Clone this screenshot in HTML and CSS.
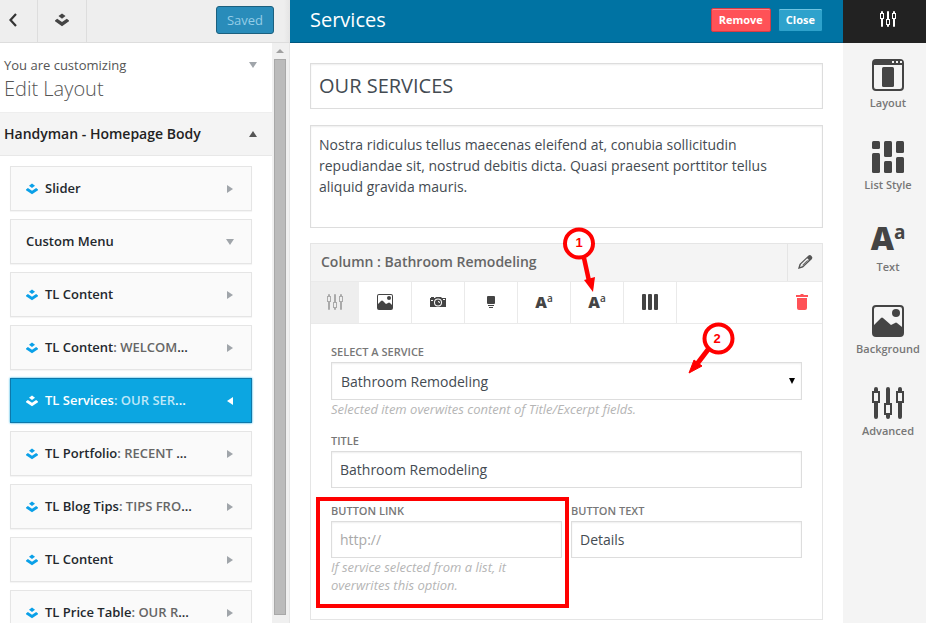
FILE: index.html
```html
<!DOCTYPE html>
<html lang="en">
<head>
<meta charset="utf-8">
<title>Edit Layout</title>
<link rel="stylesheet" href="styles.css">
</head>
<body>
<svg class="sprite" aria-hidden="true">
  <symbol id="i-stack" viewBox="0 0 16 16"><path d="M8 .500 12 3.500 8 6.500 4 3.500Z"/><path d="M2.500 6.500 8 10.300 13.500 6.500 16 8.500V9.500L8 15 0 9.500V8.500Z"/></symbol>
  <symbol id="i-sliders" viewBox="0 0 32 32"><path d="M4 0a2 2 0 0 1 2 2v2h2v12H6v14a2 2 0 0 1-4 0V16H0V4h2V2a2 2 0 0 1 2-2ZM2 6v8h4V6ZM28 0a2 2 0 0 1 2 2v2h2v12h-2v14a2 2 0 0 1-4 0V16h-2V4h2V2a2 2 0 0 1 2-2ZM26 6v8h4V6ZM16 0a2 2 0 0 1 2 2v14h2v12h-2v2a2 2 0 0 1-4 0v-2h-2V16h2V2a2 2 0 0 1 2-2ZM14 18v8h4v-8Z" fill-rule="evenodd"/></symbol>
  <symbol id="i-layout" viewBox="0 0 32 32"><path fill-rule="evenodd" d="M4 0h24a4 4 0 0 1 4 4v24a4 4 0 0 1-4 4H4a4 4 0 0 1-4-4V4a4 4 0 0 1 4-4ZM2 6v22a2 2 0 0 0 2 2h24a2 2 0 0 0 2-2V6ZM20 2v2h2V2ZM24 2v2h2V2ZM28 2v2h2V2Z"/><rect x="10" y="8" width="12" height="20" rx="1.500"/></symbol>
  <symbol id="i-list" viewBox="0 0 32 32"><rect width="8" height="8" rx="1.500"/><rect y="12" width="8" height="20" rx="1.500"/><rect x="12" width="8" height="16" rx="1.500"/><rect x="12" y="20" width="8" height="12" rx="1.500"/><rect x="24" width="8" height="12" rx="1.500"/><rect x="24" y="16" width="8" height="16" rx="1.500"/></symbol>
  <symbol id="i-image" viewBox="0 0 32 32"><path fill-rule="evenodd" d="M4 0h24a4 4 0 0 1 4 4v24a4 4 0 0 1-4 4H4a4 4 0 0 1-4-4V4a4 4 0 0 1 4-4ZM2 20l7-7q1-1 2 0l8 7 4-2q1-1 2 0l5 4V4a2 2 0 0 0-2-2H4a2 2 0 0 0-2 2Z"/><circle cx="24" cy="8" r="4"/></symbol>
  <symbol id="i-picture" viewBox="0 0 16 16"><path fill-rule="evenodd" d="M2 0h12a2 2 0 0 1 2 2v12a2 2 0 0 1-2 2H2a2 2 0 0 1-2-2V2a2 2 0 0 1 2-2ZM1 10l3-3q1-1 2 0l3 3 2-1q1-1 2 0l2 2V2a1 1 0 0 0-1-1H2a1 1 0 0 0-1 1Z"/><circle cx="12" cy="4" r="2"/></symbol>
  <symbol id="i-camera" viewBox="0 0 16 16"><path fill-rule="evenodd" d="M1 3h3v1h1l1-1h5l1 1h4v9H0V4h1ZM8 4.500a4 4 0 1 0 0 8 4 4 0 0 0 0-8ZM13 5v1h2V5ZM1 6v1h2V6Z"/><path fill-rule="evenodd" d="M8 5.500a3 3 0 1 1 0 6 3 3 0 0 1 0-6ZM8 7v1a1 1 0 0 1 1 1h1A2 2 0 0 0 8 7Z"/></symbol>
  <symbol id="i-hover" viewBox="0 0 16 16"><rect x="4" y="2" width="8" height="8" rx="1"/><path d="M5 11h6v1H5ZM6 13h4v1H6Z"/></symbol>
  <symbol id="i-columns" viewBox="0 0 16 16"><rect width="4" height="16" rx="1"/><rect x="6" width="4" height="16" rx="1"/><rect x="12" width="4" height="16" rx="1"/></symbol>
  <symbol id="i-trash" viewBox="0 0 16 16"><path d="M2 1h4l1-1h2l1 1h4v2H2ZM3 4h10v10a2 2 0 0 1-2 2H5a2 2 0 0 1-2-2Z"/></symbol>
  <symbol id="i-pencil" viewBox="0 0 16 16"><path fill-rule="evenodd" d="M11.500 1.500q1.500-1 3 .500t.500 3L6 13.500 1 15l1.500-5ZM10.200 4.200 4 10.300 3 13l2.700-1 6.200-6.100Z"/><path d="m10.500 6.300-5 5" fill="none" stroke="currentColor" stroke-width="1"/></symbol>
  <symbol id="i-down" viewBox="0 0 8 6"><path d="M0 0h8L4 6Z"/></symbol>
  <symbol id="i-right" viewBox="0 0 6 8"><path d="M0 0v8l6-4Z"/></symbol>
</svg>

<div class="app">
  <aside class="sidebar">
    <header class="side-head">
      <button class="head-btn back" aria-label="Back"><svg viewBox="0 0 8 14" width="8" height="14"><path d="M7 1 1.500 7 7 13" fill="none" stroke="currentColor" stroke-width="2.200"/></svg></button>
      <button class="head-btn stack" aria-label="Layouts"><svg width="14" height="14"><use href="#i-stack"/></svg></button>
      <button class="saved" disabled>Saved</button>
    </header>
    <div class="side-body">
      <div class="side-content">
        <div class="intro">
          <div><p>You are customizing</p><h1>Edit Layout</h1></div>
          <svg class="arrow" width="8" height="6"><use href="#i-down"/></svg>
        </div>
        <h2 class="section-title">Handyman - Homepage Body <svg width="8" height="6" viewBox="0 0 8 6"><path d="M0 6h8L4 0Z"/></svg></h2>
        <ul class="blocks">
          <li><button class="block"><svg class="mark" width="12" height="12"><use href="#i-stack"/></svg><span class="name">Slider</span><svg class="arrow side" width="6" height="8"><use href="#i-right"/></svg></button></li>
          <li><button class="block"><span class="name">Custom Menu</span><svg class="arrow" width="8" height="6"><use href="#i-down"/></svg></button></li>
          <li><button class="block"><svg class="mark" width="12" height="12"><use href="#i-stack"/></svg><span class="name">TL Content</span><svg class="arrow side" width="6" height="8"><use href="#i-right"/></svg></button></li>
          <li><button class="block"><svg class="mark" width="12" height="12"><use href="#i-stack"/></svg><span class="name">TL Content<i>: WELCOM</i>...</span><svg class="arrow side" width="6" height="8"><use href="#i-right"/></svg></button></li>
          <li><button class="block active"><svg class="mark" width="12" height="12"><use href="#i-stack"/></svg><span class="name">TL Services<i>: OUR SER</i>...</span><svg class="arrow side" width="6" height="8" viewBox="0 0 6 8"><path d="M6 0v8L0 4Z"/></svg></button></li>
          <li><button class="block"><svg class="mark" width="12" height="12"><use href="#i-stack"/></svg><span class="name">TL Portfolio<i>: RECENT</i> ...</span><svg class="arrow side" width="6" height="8"><use href="#i-right"/></svg></button></li>
          <li><button class="block"><svg class="mark" width="12" height="12"><use href="#i-stack"/></svg><span class="name">TL Blog Tips<i>: TIPS FRO</i>...</span><svg class="arrow side" width="6" height="8"><use href="#i-right"/></svg></button></li>
          <li><button class="block"><svg class="mark" width="12" height="12"><use href="#i-stack"/></svg><span class="name">TL Content</span><svg class="arrow side" width="6" height="8"><use href="#i-right"/></svg></button></li>
          <li><button class="block"><svg class="mark" width="12" height="12"><use href="#i-stack"/></svg><span class="name">TL Price Table<i>: OUR R</i>...</span><svg class="arrow side" width="6" height="8"><use href="#i-right"/></svg></button></li>
        </ul>
      </div>
      <div class="scrollbar"><svg width="8" height="4" viewBox="0 0 8 4"><path d="M0 4h8L4 0Z"/></svg><div class="thumb"></div></div>
    </div>
  </aside>

  <main class="main">
    <header class="main-head">
      <h2>Services</h2>
      <button class="action remove">Remove</button>
      <button class="action close">Close</button>
    </header>
    <div class="main-body">
      <input class="control heading" type="text" aria-label="Heading" value="OUR SERVICES">
      <textarea class="control excerpt" aria-label="Description">Nostra ridiculus tellus maecenas eleifend at, conubia sollicitudin repudiandae sit, nostrud debitis dicta. Quasi praesent porttitor tellus aliquid gravida mauris.</textarea>
      <section class="column">
        <header class="column-head"><h3>Column : Bathroom Remodeling</h3><button class="edit" aria-label="Rename"><svg width="16" height="16"><use href="#i-pencil"/></svg></button></header>
        <div class="tools">
          <button class="tool current" aria-label="Settings"><svg width="16" height="16"><use href="#i-sliders"/></svg></button>
          <button class="tool" aria-label="Image"><svg width="16" height="16"><use href="#i-picture"/></svg></button>
          <button class="tool" aria-label="Camera"><svg width="16" height="16"><use href="#i-camera"/></svg></button>
          <button class="tool" aria-label="Hover"><svg width="16" height="16"><use href="#i-hover"/></svg></button>
          <button class="tool letters">A<sup>a</sup></button>
          <div class="tool-wrap">
            <button class="tool letters">A<sup>a</sup></button>
            <svg class="callout one" width="32" height="66" viewBox="0 0 32 66"><path d="m21 31 5 23" stroke="#f00" stroke-width="4.500"/><path d="m21 53 11-3-2 15Z" fill="#f00"/><circle cx="16" cy="16.500" r="14" fill="#fff" stroke="#f00" stroke-width="4"/><text x="16" y="20">1</text></svg>
          </div>
          <button class="tool" aria-label="Columns"><svg width="16" height="16"><use href="#i-columns"/></svg></button>
          <button class="delete" aria-label="Delete"><svg width="16" height="16"><use href="#i-trash"/></svg></button>
        </div>
        <div class="fields">
          <div class="field">
            <label for="service">SELECT A SERVICE</label>
            <div class="select-wrap">
              <select class="control" id="service"><option>Bathroom Remodeling</option></select>
              <svg class="caret" width="6" height="6" viewBox="0 0 6 6"><path d="M0 0h6L3 6Z"/></svg>
              <svg class="callout two" width="48" height="54" viewBox="0 0 48 54"><path d="M21 26 8 43" stroke="#f00" stroke-width="5"/><path d="M0 52 5 39l8 6Z" fill="#f00" stroke="#f00"/><circle cx="29.500" cy="17.500" r="14" fill="#fff" stroke="#f00" stroke-width="4"/><text x="28" y="22">2</text></svg>
            </div>
            <p class="help">Selected item overwites content of Title/Excerpt fields.</p>
          </div>
          <div class="field">
            <label for="title">TITLE</label>
            <input class="control" id="title" type="text" value="Bathroom Remodeling">
          </div>
          <div class="pair">
            <div class="field marked">
              <label for="link">BUTTON LINK</label>
              <input class="control" id="link" type="text" placeholder="http://">
              <p class="help">If service selected from a list, it overwrites this option.</p>
            </div>
            <div class="field">
              <label for="text">BUTTON TEXT</label>
              <input class="control" id="text" type="text" value="Details">
            </div>
          </div>
        </div>
      </section>
    </div>
  </main>

  <nav class="rail">
    <button class="rail-head" aria-label="Options"><svg width="16" height="16"><use href="#i-sliders"/></svg></button>
    <button class="rail-item"><svg width="32" height="32"><use href="#i-layout"/></svg>Layout</button>
    <button class="rail-item"><svg width="32" height="32"><use href="#i-list"/></svg>List Style</button>
    <button class="rail-item"><span class="letters big">A<sup>a</sup></span>Text</button>
    <button class="rail-item"><svg width="32" height="32"><use href="#i-image"/></svg>Background</button>
    <button class="rail-item"><svg width="32" height="32"><use href="#i-sliders"/></svg>Advanced</button>
  </nav>
</div>
</body>
</html>
```
FILE: styles.css
```css
* { box-sizing: border-box; }
body, h1, h2, h3, p, ul { margin: 0; padding: 0; }
body { font: 13px/18px "Open Sans", "Noto Sans", sans-serif; color: #555; background: #fff; }
button, input, select, textarea { font: inherit; margin: 0; }
button { padding: 0; border: 0; background: none; color: inherit; }
svg { fill: currentColor; display: block; flex: none; }
.sprite { position: absolute; width: 0; height: 0; }
.app { display: flex; height: 100vh; overflow: hidden; }

.sidebar { flex: none; width: 290px; display: flex; flex-direction: column; }
.side-head { flex: none; height: 43px; display: flex; background: linear-gradient(to left, #e4e4e4, #eee 6px); border-bottom: 1px solid #ddd; padding-right: 16px; }
.head-btn { border-right: 1px solid #ddd; color: #444; display: flex; align-items: center; justify-content: center; padding-bottom: 2px; }
.back { width: 38px; padding-right: 11px; color: #333; }
.stack { width: 49px; padding-bottom: 3px; }
.saved { align-self: center; margin: 0 0 2px auto; width: 58px; height: 28px; background: #298cba; border: 1px solid #1b607f; border-radius: 3px; color: #94cde7; }
.side-body { flex: 1; min-height: 0; display: flex; }
.side-content { flex: 1; overflow: hidden; }
.intro { height: 70px; padding: 13px 15px 0 4px; display: flex; justify-content: space-between; border-bottom: 1px solid #eee; }
.intro h1 { font-size: 20px; line-height: 30px; font-weight: 300; }
.arrow { color: #a0a5aa; }
.intro .arrow { margin-top: 6px; }
.section-title { height: 43px; padding: 0 15px 0 4px; display: flex; align-items: center; justify-content: space-between; font-size: 14px; font-weight: 600; color: #222; background: #f4f4f4; border-bottom: 1px solid #e8e8e8; }
.section-title svg { color: #555; }
.blocks { list-style: none; padding: 10px 20px 0 10px; display: flex; flex-direction: column; gap: 8px; }
.block { width: 100%; height: 45px; padding: 0 17px 0 15px; display: flex; align-items: center; gap: 7px; text-align: left; font-weight: 600; color: #23282d; background: #fafafa; border: 1px solid #e5e5e5; box-shadow: 0 1px 1px rgba(0, 0, 0, .04); }
.block .name { flex: 1; padding-bottom: 2px; white-space: nowrap; }
.block i { font-style: normal; color: #666; }
.block .side { margin-right: 1px; }
.mark { color: #0aa0e8; }
.block.active { background: #0ca6e1; border-color: #0e78aa; color: #fff; box-shadow: 0 0 2px #0ca6e1; }
.active i { color: #bce7f8; }
.active .mark, .active .arrow { color: #fff; }
.scrollbar { width: 18px; padding: 6px 3px 8px 2px; background: #f0f0f0; border-right: 1px solid #e5e5e5; display: flex; flex-direction: column; align-items: center; gap: 6px; color: #a0a0a0; }
.thumb { flex: 1; width: 100%; background: #bbb; border: 1px solid #a8a8a8; }

.main { flex: 1; min-width: 0; }
.main-head { height: 43px; padding: 0 20px; display: flex; align-items: center; background: #0073a3; border-bottom: 1px solid #00577f; }
.main-head h2 { flex: 1; padding-bottom: 2px; font-size: 20px; line-height: 28px; font-weight: 500; color: #fff; }
.action { height: 24px; padding: 0 7px; margin: 0 0 2px 7px; font-size: 11px; font-weight: 700; color: #fff; border-radius: 2px; }
.remove { background: #ff5257; border: 1px solid #d63b45; box-shadow: inset 0 1px #ff888b; }
.close { background: #2ea2cc; border: 1px solid #0074a2; box-shadow: inset 0 1px #70c4e3; }
.main-body { padding: 20px; display: flex; flex-direction: column; }
.control { display: block; width: 100%; height: 37px; padding: 0 8px; font-size: 14px; line-height: 21px; color: #444b52; background: #fff; border: 1px solid #ddd; border-radius: 0; box-shadow: inset 0 1px 2px rgba(0, 0, 0, .07); }
.control.heading { height: 46px; padding-bottom: 2px; font-size: 20px; }
.control.excerpt { height: 103px; margin: 16px 0 15px; padding: 8px; resize: none; }
.column { border: 1px solid #e5e5e5; }
.column-head { height: 38px; padding-left: 10px; display: flex; align-items: center; background: #f4f4f4; border-bottom: 1px solid #eaeaea; }
.column-head h3 { flex: 1; padding-bottom: 2px; font-size: 14px; font-weight: 600; color: #666; }
.edit { width: 35px; height: 100%; padding-bottom: 2px; border-left: 1px solid #e5e5e5; display: flex; align-items: center; justify-content: center; color: #555; }
.tools { height: 42px; display: flex; border-bottom: 1px solid #eaeaea; }
.tool { width: 53px; height: 41px; padding-bottom: 2px; display: flex; align-items: center; justify-content: center; border-right: 1px solid #eaeaea; color: #444; }
.tool.current { width: 48px; background: #eee; border-color: #eee; color: #aaa; }
.tool-wrap { position: relative; }
.letters { font-size: 16px; line-height: 18px; font-weight: 800; }
.letters sup { font-size: 10px; line-height: 10px; font-weight: 600; align-self: flex-start; }
.tool.letters sup { margin-top: 11px; }
.delete { margin: 0 12px 0 auto; padding-bottom: 2px; color: #ff5257; }
.fields { padding: 19px 20px 25px; display: flex; flex-direction: column; gap: 14px; }
.field label { display: block; height: 19px; font-size: 11px; font-weight: 600; color: #777; }
.select-wrap { position: relative; }
select.control { appearance: none; height: 38px; padding: 0 9px; }
.caret { position: absolute; right: 7px; top: 16px; color: #000; }
.help { font-style: italic; color: #b5b5b5; }
.pair { display: grid; grid-template-columns: 1fr 1fr; gap: 9px; }
.marked { position: relative; }
.marked .help { padding-right: 20px; }
.marked::after { content: ""; position: absolute; inset: -5px -7px -14px -15px; border: 4px solid #f00; pointer-events: none; }
.control::placeholder { color: #a9a9a9; opacity: 1; }
.callout { position: absolute; z-index: 1; overflow: visible; pointer-events: none; }
.callout.one { left: -8px; top: -55px; }
.callout.two { right: 65px; top: -41px; }
.callout text { font: 700 13px "Liberation Sans", sans-serif; fill: #f00; text-anchor: middle; }

.rail { flex: none; width: 83px; background: #f4f4f4; display: flex; flex-direction: column; align-items: stretch; }
.rail-head { height: 43px; margin-bottom: 16px; padding: 0 0 6px 7px; display: flex; align-items: center; justify-content: center; background: #222; color: #fff; }
.rail-item { height: 82px; padding-left: 7px; display: flex; flex-direction: column; align-items: center; gap: 3px; font-size: 11px; font-weight: 600; color: #777; }
.rail-item svg, .big { color: #444; }
.big { height: 32px; display: flex; font-size: 32px; line-height: 30px; }
.big sup { font-size: 19px; line-height: 18px; font-weight: 700; }
```
